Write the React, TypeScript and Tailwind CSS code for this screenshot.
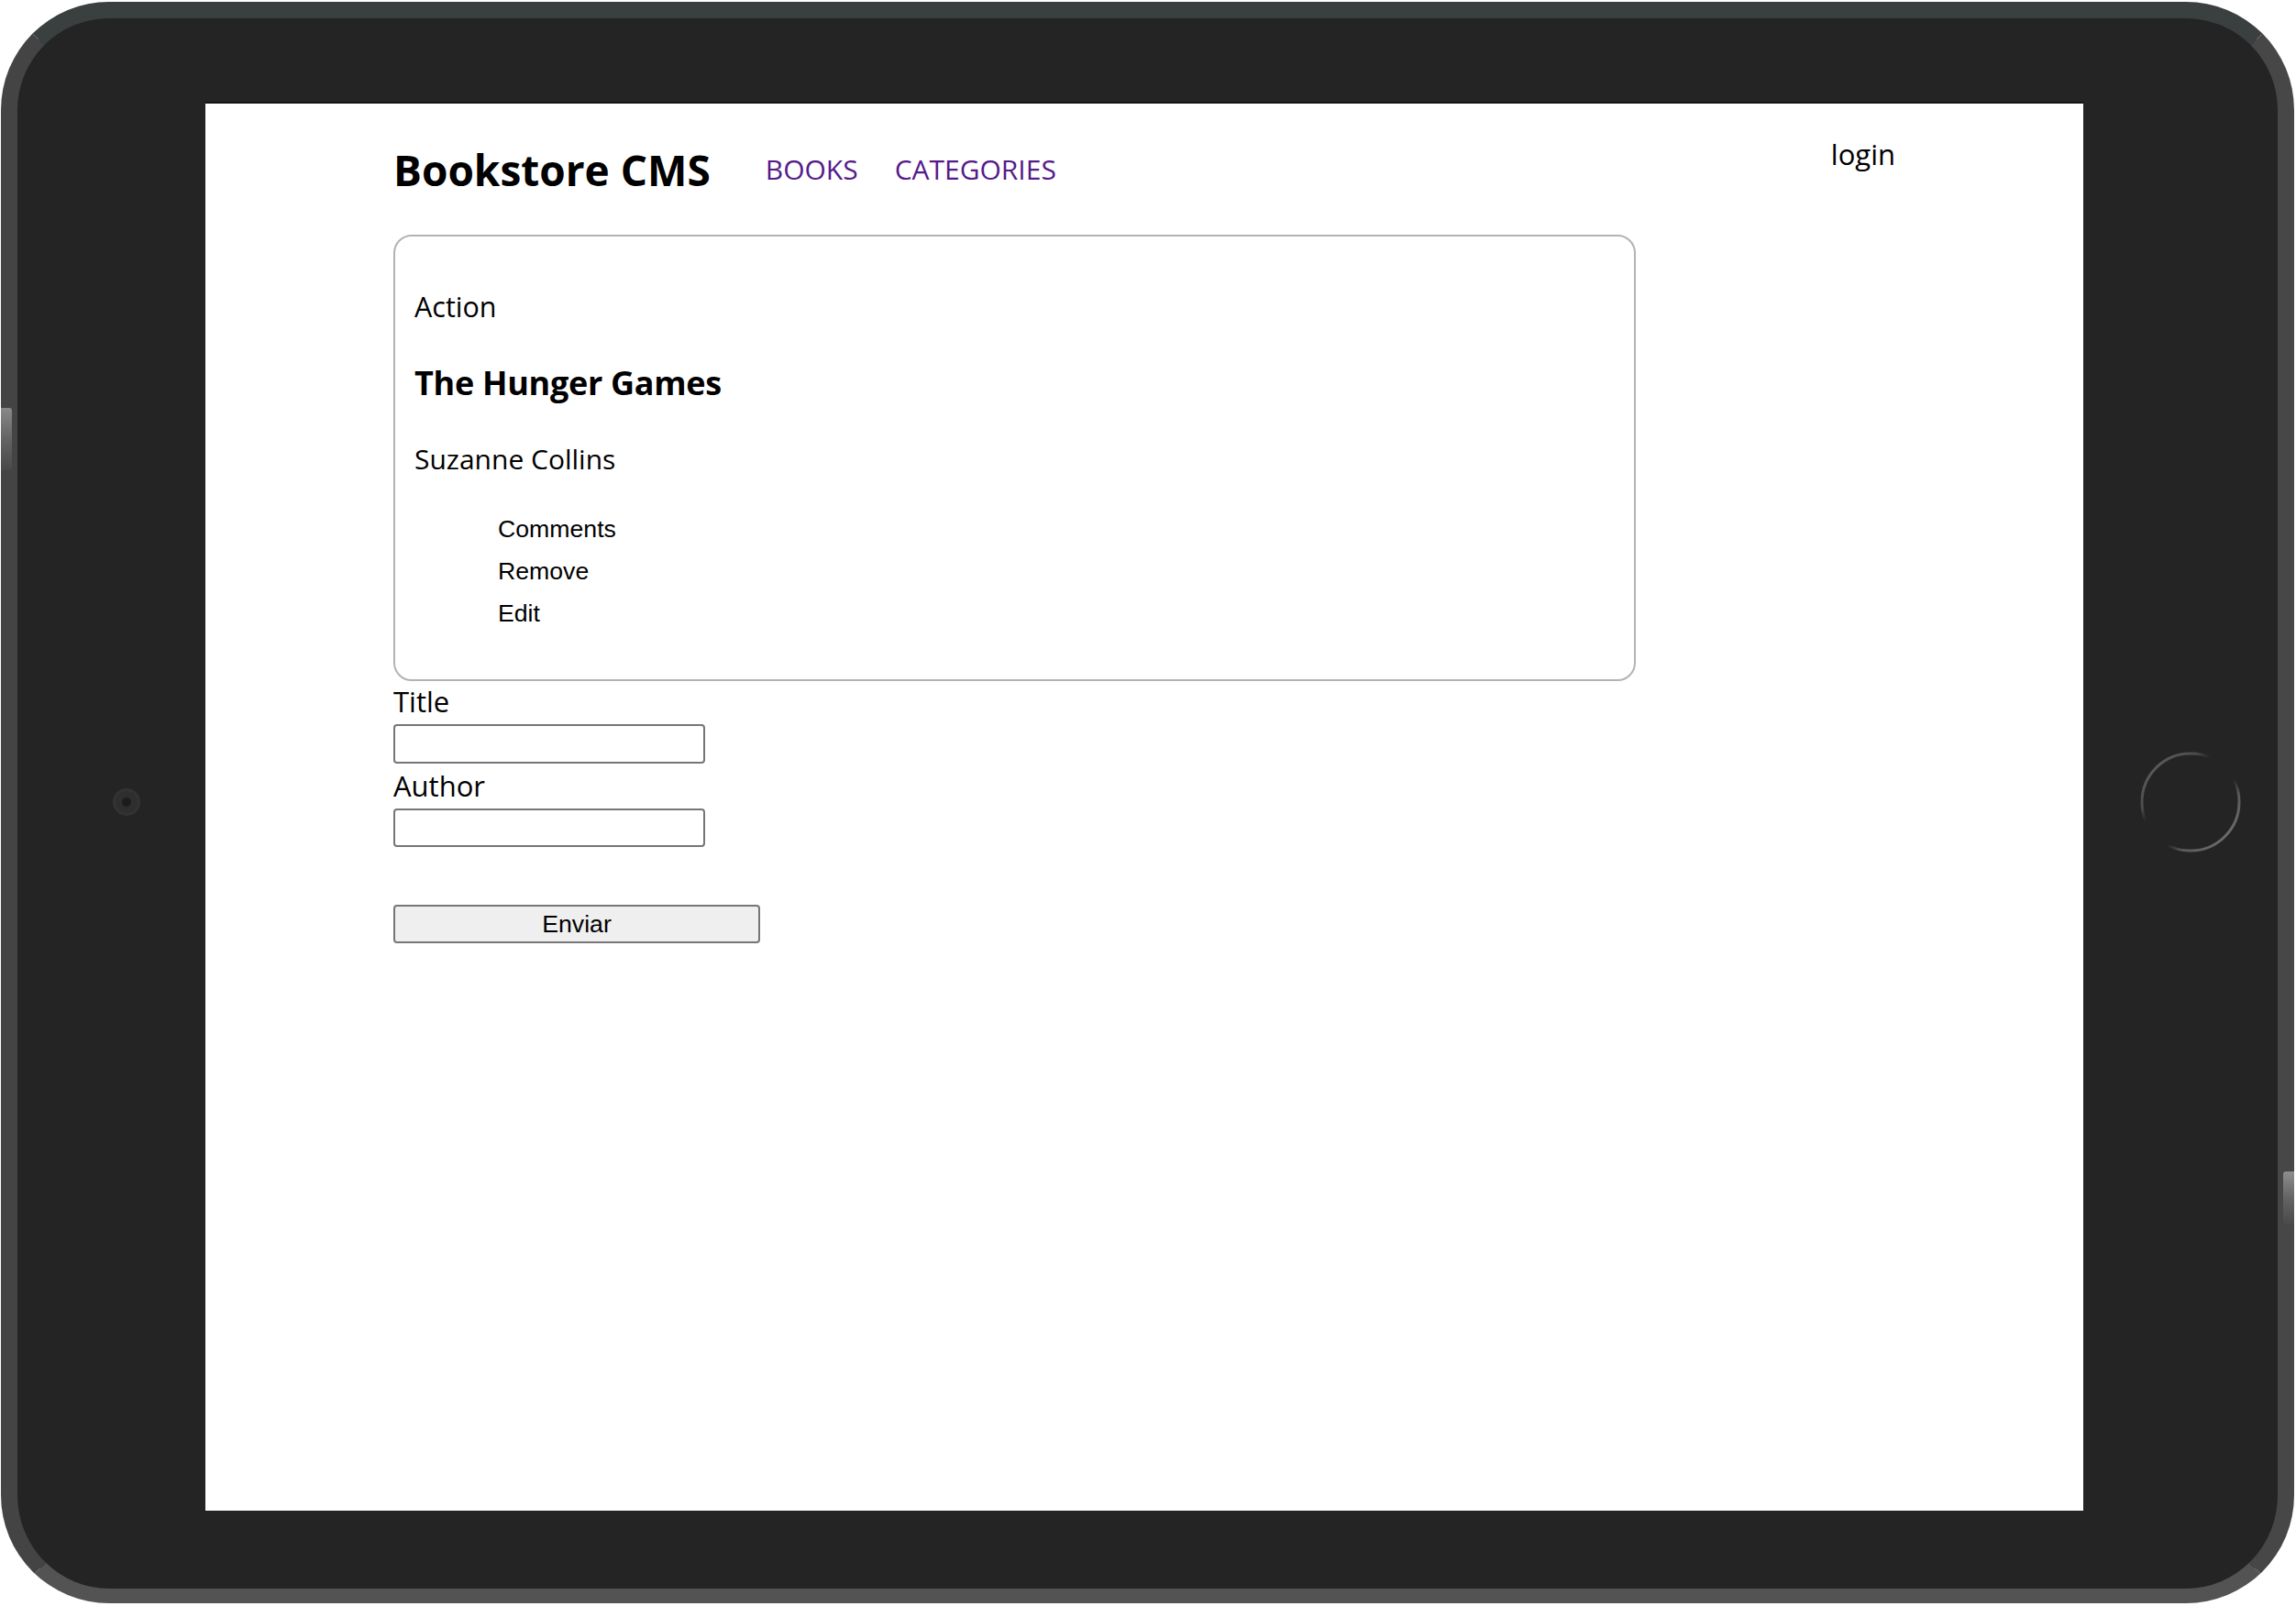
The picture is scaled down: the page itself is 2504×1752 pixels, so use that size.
import React from 'react'

function HomeButton() {
  return (
    <svg width="112" height="112" viewBox="0 0 112 112">
      <defs>
        <linearGradient id="ring" x1="0" y1="0" x2="1" y2="1">
          <stop offset="0" stopColor="#6e6e6e" stopOpacity="0.9" />
          <stop offset="0.28" stopColor="#666666" stopOpacity="0.6" />
          <stop offset="0.37" stopColor="#5a5a5a" stopOpacity="0" />
          <stop offset="0.6" stopColor="#5a5a5a" stopOpacity="0" />
          <stop offset="0.7" stopColor="#6e6e6e" stopOpacity="0.7" />
          <stop offset="1" stopColor="#808080" stopOpacity="0.95" />
        </linearGradient>
      </defs>
      <circle cx="56" cy="56" r="53" fill="none" stroke="url(#ring)" strokeWidth="3" />
    </svg>
  )
}

function Camera() {
  return (
    <div className="w-[30px] h-[30px] rounded-full bg-[#2e2e2e] border-[3px] border-[#333333] flex items-center justify-center">
      <div className="w-[10px] h-[10px] rounded-full bg-[#1c1c1c]" />
    </div>
  )
}

export default function App() {
  const actions = ['Comments', 'Remove', 'Edit']

  return (
    <div className="w-[2504px] h-[1752px] bg-white pl-[1px] pt-[2px] overflow-hidden">
      {/* Device frame */}
      <div className="relative w-[2501px] h-[1747px] rounded-[118px] border-t-[18px] border-l-[18px] border-r-[18px] border-b-[16px] border-t-[#3a403f] border-l-[#444444] border-r-[#474747] border-b-[#535353] bg-[#242424] pt-[91px] pb-[85px]">
        {/* side buttons */}
        <div className="absolute left-[-18px] top-[425px] w-[12px] h-[68px] rounded-r-[3px] bg-gradient-to-b from-[#9a9a9a] via-[#6b6b6b] to-[#4a4a4a] opacity-80" />
        <div className="absolute right-[-18px] top-[1258px] w-[12px] h-[58px] rounded-l-[3px] bg-gradient-to-b from-[#a0a0a0] via-[#6b6b6b] to-[#4a4a4a] opacity-80" />

        <div className="flex items-center h-[1537px]">
          <div className="w-[205px] h-full flex items-center pl-[104px] pb-[9px]">
            <Camera />
          </div>

          {/* Screen */}
          <div className="w-[2048px] h-[1537px] bg-white border-t-[2px] border-[#141414] px-[205px] font-['Open_Sans',sans-serif] text-black">
            {/* Header */}
            <header className="flex justify-between items-start pt-[33px]">
              <div className="flex items-start mt-[9px]">
                <h1 className="text-[46px] leading-[60px] font-bold mr-[60px]">Bookstore CMS</h1>
                <nav className="flex gap-[40px] mt-[10px] text-[30px] leading-[40px] text-[#551a8b]">
                  <a href="#books">BOOKS</a>
                  <a href="#categories">CATEGORIES</a>
                </nav>
              </div>
              <div className="text-[31px] leading-[40px] mt-[2px]">login</div>
            </header>

            {/* Book card */}
            <div className="mt-[41px] w-[1355px] border-[2px] border-[#b3b3b3] rounded-[20px] pt-[56px] pb-[57px] pl-[21px]">
              <p className="text-[30.5px] leading-[40px]">Action</p>
              <h2 className="mt-[40px] text-[36px] leading-[48px] font-bold tracking-[-0.3px]">The Hunger Games</h2>
              <p className="mt-[39px] text-[30px] leading-[40px]">Suzanne Collins</p>
              <ul className="mt-[41px] pl-[91px] flex flex-col gap-[16px] font-['Liberation_Sans',Arial,sans-serif] text-[26.67px] leading-[30px]">
                {actions.map((a) => (
                  <li key={a}>
                    <button type="button" className="bg-transparent p-0 leading-[30px]">{a}</button>
                  </li>
                ))}
              </ul>
            </div>

            {/* Form */}
            <form className="flex flex-col items-start" onSubmit={(e) => e.preventDefault()}>
              <label className="mt-[2px] text-[31px] leading-[40px]" htmlFor="title">Title</label>
              <input id="title" type="text" className="mt-[5px] w-[340px] h-[43px] border-[2px] border-[#767676] rounded-[4px] bg-white" />
              <label className="mt-[4px] text-[31px] leading-[40px]" htmlFor="author">Author</label>
              <input id="author" type="text" className="mt-[5px] w-[340px] h-[42px] border-[2px] border-[#767676] rounded-[4px] bg-white" />
              <button type="submit" className="mt-[63px] w-[400px] h-[42px] border-[2px] border-[#767676] rounded-[4px] bg-[#efefef] font-['Liberation_Sans',Arial,sans-serif] text-[26.67px] leading-[30px] text-black">
                Enviar
              </button>
            </form>
          </div>

          <div className="w-[212px] h-full flex items-center pl-[61px] pb-[9px]">
            <HomeButton />
          </div>
        </div>
      </div>
    </div>
  )
}
